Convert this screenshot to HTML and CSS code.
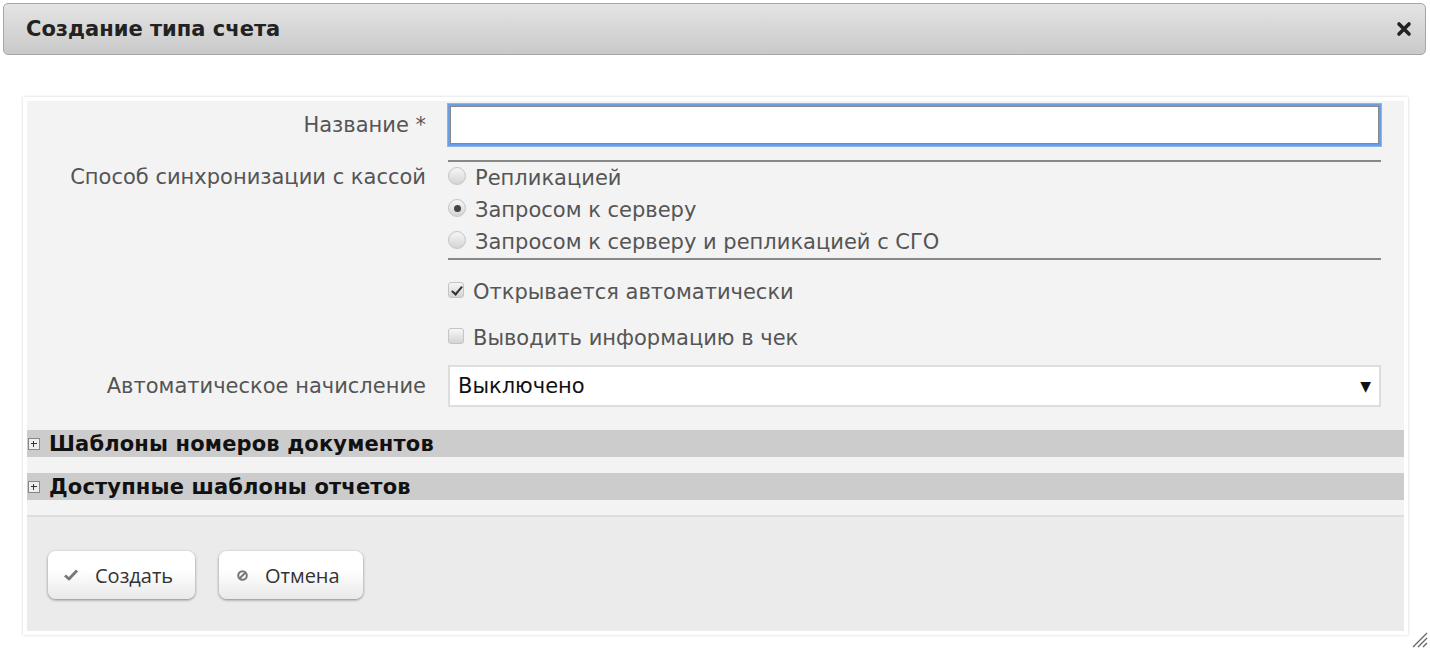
FILE: index.html
```html
<!DOCTYPE html>
<html lang="ru">
<head>
    <meta charset="UTF-8">
    <title>Создание типа счета</title>
    <link rel="stylesheet" href="styles.css">
</head>
<body>
    <div class="dialog">
        <div class="titlebar">
            <span class="title">Создание типа счета</span>
            <span class="close">
                <svg width="16" height="16" viewBox="0 0 16 16"><path d="M3 3 L13 13 M13 3 L3 13" stroke="#222" stroke-width="3.6" stroke-linecap="round"/></svg>
            </span>
        </div>

        <div class="panel">
            <div class="panel-inner">
                <div class="form">
                    <label class="label row-name" for="name">Название *</label>
                    <div class="field row-name">
                        <input type="text" id="name" class="text-input">
                    </div>

                    <div class="label row-sync">Способ синхронизации с кассой</div>
                    <div class="field row-sync">
                        <div class="radio-group">
                            <label class="option"><input type="radio" name="sync"> Репликацией</label>
                            <label class="option"><input type="radio" name="sync" checked> Запросом к серверу</label>
                            <label class="option"><input type="radio" name="sync"> Запросом к серверу и репликацией с СГО</label>
                        </div>
                    </div>

                    <div class="label"></div>
                    <div class="field row-check">
                        <label class="option"><input type="checkbox" checked> Открывается автоматически</label>
                    </div>

                    <div class="label"></div>
                    <div class="field row-check2">
                        <label class="option"><input type="checkbox"> Выводить информацию в чек</label>
                    </div>

                    <label class="label row-select" for="accrual">Автоматическое начисление</label>
                    <div class="field row-select">
                        <div class="select">
                            <span>Выключено</span>
                            <span class="arrow">▼</span>
                        </div>
                    </div>
                </div>

                <div class="section section-first">
                    <span class="plus"></span>Шаблоны номеров документов
                </div>
                <div class="section">
                    <span class="plus"></span>Доступные шаблоны отчетов
                </div>

                <div class="footer">
                    <button class="btn btn-create">
                        <svg width="16" height="14" viewBox="0 0 16 14"><path d="M2 7.5 L6 11 L14 2.5" fill="none" stroke="#777" stroke-width="2.8" stroke-linejoin="round"/></svg>
                        Создать
                    </button>
                    <button class="btn btn-cancel">
                        <svg width="13" height="13" viewBox="0 0 14 14"><circle cx="7" cy="7" r="4.6" fill="none" stroke="#777" stroke-width="2.2"/><path d="M4 10 L10 4" stroke="#777" stroke-width="2.2"/></svg>
                        Отмена
                    </button>
                </div>
            </div>
        </div>

        <svg class="resize" width="18" height="18" viewBox="0 0 18 18">
            <path d="M17 3 L3 17 M17 8 L8 17 M17 13 L13 17" stroke="#666" stroke-width="1.3"/>
        </svg>
    </div>
</body>
</html>
```

FILE: styles.css
```css
* {
    box-sizing: border-box;
}

body {
    margin: 0;
    background: #fff;
    font-family: 'DejaVu Sans', Verdana, sans-serif;
    color: #555;
}

.dialog {
    position: relative;
    width: 1430px;
    height: 648px;
    padding-top: 3px;
}

.titlebar {
    margin: 0 4px 0 3px;
    height: 52px;
    display: flex;
    align-items: center;
    justify-content: space-between;
    padding: 0 13px 0 22px;
    border: 1px solid #a6a6a6;
    border-radius: 5px;
    background: linear-gradient(#e4e4e4, #c9c9c9);
}

.title {
    font-weight: bold;
    font-size: 21px;
    color: #222;
}

.close {
    display: flex;
}

.panel {
    margin: 42px 22px 0 23px;
    border: 4px solid #fff;
    box-shadow: 0 0 3px rgba(0, 0, 0, 0.18);
}

.panel-inner {
    background: #f3f3f3;
}

.form {
    display: grid;
    grid-template-columns: 399px 933px;
    column-gap: 22px;
    padding-top: 3px;
    font-size: 21px;
}

.label {
    text-align: right;
    color: #555;
}

.row-name.label {
    padding-top: 9px;
}

.text-input {
    display: block;
    width: 100%;
    height: 42px;
    border: 2px solid #6a9de8;
    outline: 1px solid #8fb5ee;
    background: #fff;
    box-shadow: inset 0 0 0 1px #888;
}

.row-sync.label {
    padding-top: 19px;
}

.row-sync.field {
    padding-top: 14px;
}

.radio-group {
    border-top: 2px solid #888;
    border-bottom: 2px solid #888;
}

.option {
    display: flex;
    align-items: center;
    height: 32px;
    gap: 9px;
    color: #555;
}

.option input {
    appearance: none;
    margin: 0;
    width: 18px;
    height: 18px;
    border: 1px solid #c4c4c4;
    background: linear-gradient(#f6f6f6, #d4d4d4);
    flex: none;
    position: relative;
    top: -2px;
}

.option input[type="radio"] {
    border-radius: 50%;
}

.option input[type="radio"]:checked::after {
    content: '';
    position: absolute;
    left: 4.5px;
    top: 4.5px;
    width: 7px;
    height: 7px;
    border-radius: 50%;
    background: #444;
}

.option input[type="checkbox"] {
    width: 16px;
    height: 16px;
    border-radius: 3px;
}

.option input[type="checkbox"]:checked::after {
    content: '';
    position: absolute;
    left: 5px;
    top: 1px;
    width: 4px;
    height: 9px;
    border: solid #333;
    border-width: 0 2px 2px 0;
    transform: rotate(40deg);
}

.row-check {
    padding-top: 16px;
}

.row-check2 {
    padding-top: 14px;
}

.row-select.label {
    padding-top: 20px;
}

.row-select.field {
    padding-top: 11px;
}

.select {
    height: 42px;
    display: flex;
    align-items: center;
    justify-content: space-between;
    padding: 0 8px 0 8px;
    border: 2px solid #ddd;
    background: #fff;
    color: #111;
}

.arrow {
    font-size: 14px;
}

.section {
    height: 27px;
    display: flex;
    align-items: center;
    gap: 9px;
    padding-left: 1px;
    background: #ccc;
    color: #111;
    font-weight: bold;
    font-size: 21px;
    letter-spacing: 0.15px;
}

.section-first {
    margin-top: 23px;
}

.section + .section {
    margin-top: 16px;
}

.plus {
    width: 12px;
    height: 12px;
    border: 1px solid #888;
    background: #eee linear-gradient(#333, #333) center / 6px 1px no-repeat;
    position: relative;
}

.plus::after {
    content: '';
    position: absolute;
    left: 4px;
    top: 2px;
    width: 1px;
    height: 6px;
    background: #333;
}

.footer {
    margin-top: 15px;
    border-top: 2px solid #ddd;
    background: #ebebeb;
    height: 116px;
    display: flex;
    align-items: flex-start;
    gap: 24px;
    padding: 34px 0 0 21px;
}

.btn {
    height: 48px;
    display: flex;
    align-items: center;
    gap: 16px;
    padding: 0 0 0 15px;
    border: none;
    border-radius: 8px;
    background: linear-gradient(#fff 40%, #e9e9e9);
    box-shadow: 0 1px 3px rgba(0, 0, 0, 0.45);
    font-family: 'Open Sans', sans-serif;
    font-size: 20px;
    color: #333;
}

.btn-create {
    width: 147px;
}

.btn-cancel {
    width: 144px;
    padding-left: 17px;
}

.resize {
    position: absolute;
    right: 2px;
    bottom: 0;
}
```
